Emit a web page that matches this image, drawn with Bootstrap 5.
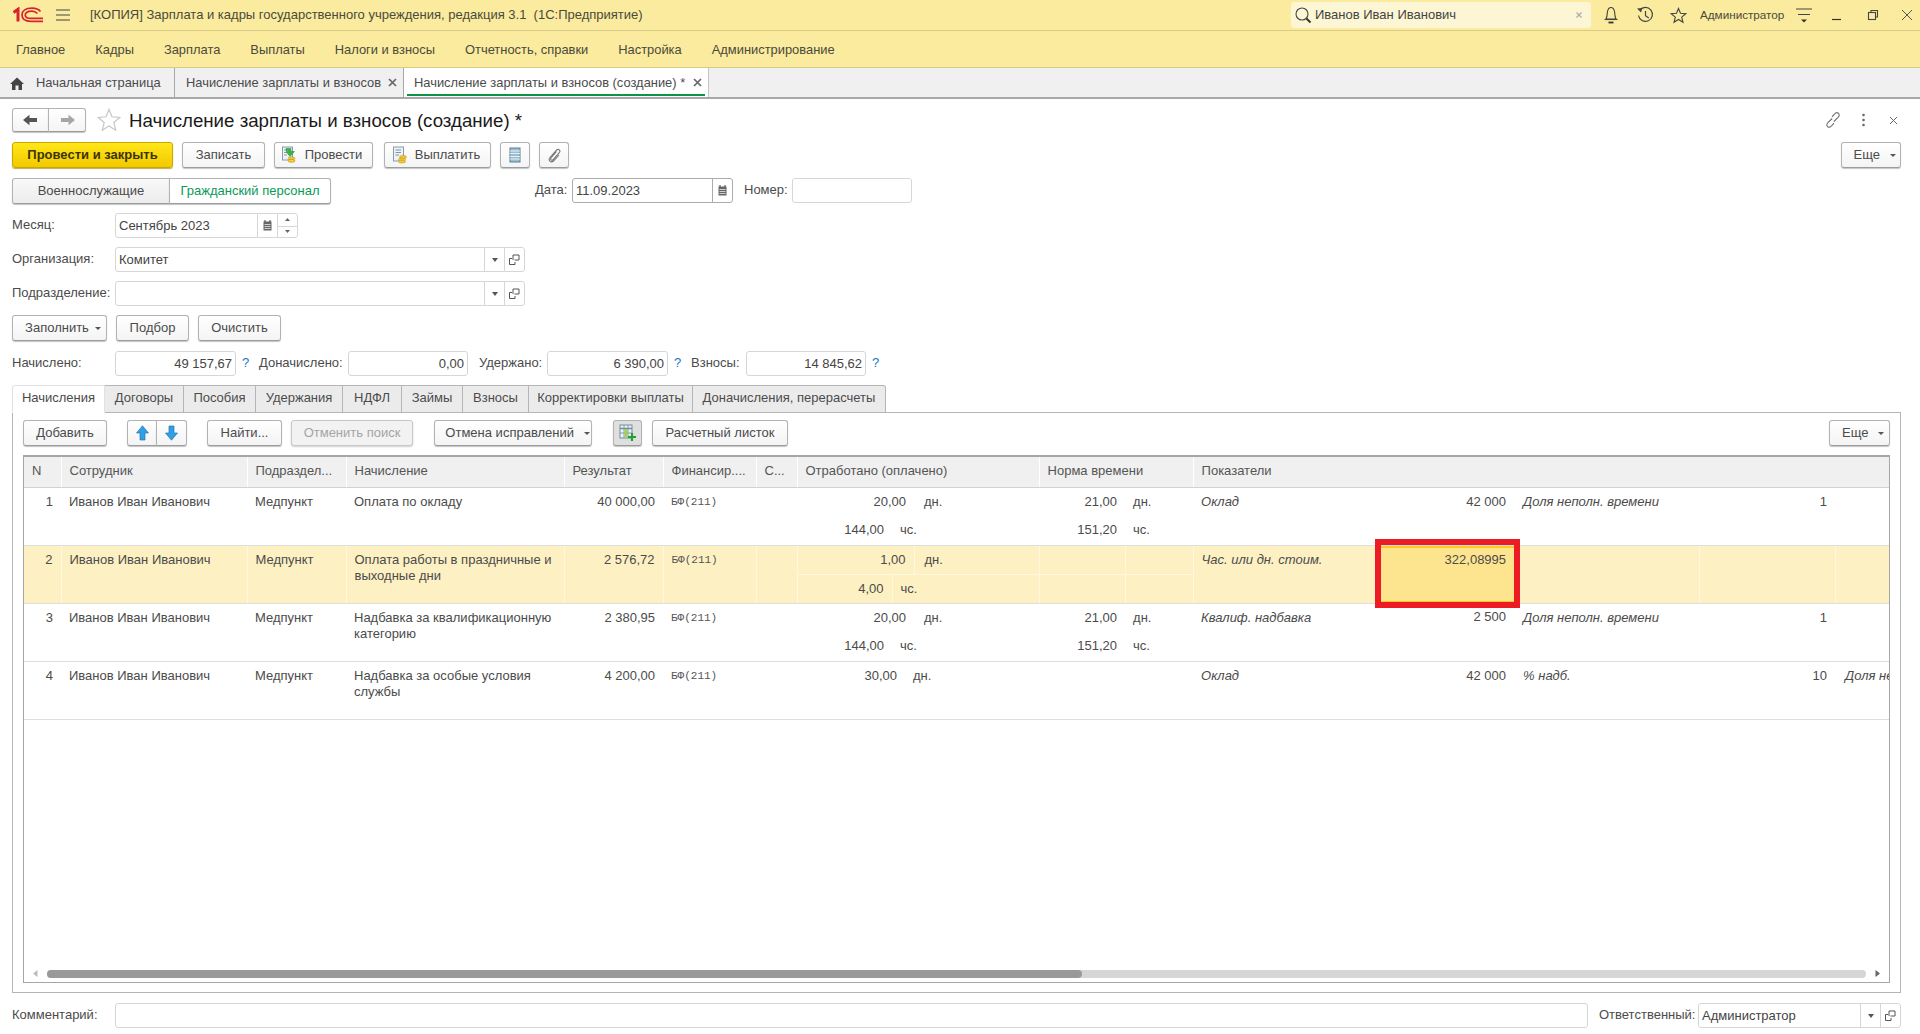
<!DOCTYPE html>
<html lang="ru"><head><meta charset="utf-8"><title>1С</title>
<link href="https://cdn.jsdelivr.net/npm/bootstrap@5.3.0/dist/css/bootstrap.min.css" rel="stylesheet">
<style>
html,body{height:100%}
body{font-family:"Liberation Sans",Arial,sans-serif;font-size:13px;line-height:16px;color:#4b4b4b;background:#fff;overflow:hidden}
.ico{display:block;flex:none}
.topbar{height:31px;background:#fbeb9f;border-bottom:1px solid #d9cb86;flex:none;padding-left:13px}
.hamb{margin-left:12px}
.apptitle{margin-left:19px;width:1201px;color:#4a4a3a;white-space:nowrap}
.searchbox{width:300px;height:26px;background:#fdf6d5;border-radius:3px;padding:0 8px 0 3px;color:#444}
.searchbox span{margin-left:3px}
.sx{margin-left:auto}
.tbi1{margin-left:12px}.tbi2{margin-left:17px}.tbi3{margin-left:16px}.adm{font-size:11.7px;color:#4a4a3a;white-space:nowrap;margin-left:13px}
.tbi4{margin-left:12px}.tbi5{margin-left:19px}.tbi6{margin-left:25px}.tbi7{margin-left:22px}
.menubar{height:37px;background:#fbeb9f;border-bottom:1px solid #d9cb86;flex:none;padding:2px 0 0 16px;margin:0;list-style:none;gap:30px;font-size:12.9px}
.menubar a{color:#4a4a3a;text-decoration:none}
.tabbar{height:31px;background:#f0f0f0;border-bottom:2px solid #a8a8a8;flex:none;font-size:12.9px}
.ptab{height:29px;border-right:1px solid #a8a8a8;white-space:nowrap;position:relative;overflow:hidden;padding-top:1px}
.ptab.on{border-right:1px solid #c4c4c4;background:#fff}
.ptab.on::after{content:"";position:absolute;left:3px;right:3px;bottom:1px;height:2px;background:#0b9444}
.pt1{width:175px;padding-left:10px;gap:12px}.pt2{width:229px;padding-left:11px}.pt3{width:305px;padding-left:10px}
.ptx{position:absolute;top:10px;right:6px}
.pt2 .ptfade{width:198px;display:block}
.formarea{padding:9px 19px 6px 12px;min-height:0}
.rowgap9{margin-top:9px}.rowgap10{margin-top:10px}
.ttl{font-size:18.7px;color:#1a1a1a;height:24px;line-height:25px;margin-left:8px}
.staricon{margin-left:11px}
.rhd{margin-left:auto;padding-right:3px}
.rhd svg+svg{margin-left:21px}
.rhd svg+svg+svg{margin-left:24px}
.ob{height:26px;padding:0;font-size:13px;line-height:22px;color:#4b4b4b;border:1px solid #b3b3b3;border-bottom-color:#9c9c9c;border-radius:3px;background:linear-gradient(#fff,#f4f4f4);box-shadow:0 1px 1px #c4c4c4;display:inline-flex;align-items:center;justify-content:center;gap:6px}
.ob:hover,.ob:active{color:#4b4b4b;border-color:#b3b3b3}
.ob.gold{background:linear-gradient(#ffe71a,#f2c900);border-color:#c9a800;color:#3c3400;font-weight:700;box-shadow:0 1px 1px #bfae50;font-size:13px}
.ob.off,.ob.off:disabled{color:#a5a5a5;background:#f2f2f2;box-shadow:0 1px 2px #d0d0d0;opacity:1;border-color:#c8c8c8}
.ob.tog{background:#dfdfdf}
.ob.grey{background:linear-gradient(#f8f8f8,#ececec)}
.ob.lit{background:#fff;color:#0a9a56}
.ob.cr{padding-left:7px}
.ob.cr9{padding-left:9px}
.ob.icl{padding-right:4px}
.nv{height:24px}
.nv .ob{height:24px;width:37px}
.nv .ob:last-child{width:38px}
.caret-s{display:inline-block;border:3px solid transparent;border-top:3.5px solid #555;border-bottom:0;margin-left:0}
.w30{width:30px}.w31{width:31px}.w60{width:60px}.w61{width:61px}.w73{width:73px}.w75{width:75px}.w83{width:83px}.w84{width:84px}.w95{width:95px}.w99{width:99px}.w107{width:107px}.w122{width:122px}.w136{width:136px}.w158{width:158px}.w161{width:161px}.w162{width:162px}.w29{width:29px}
.ml9{margin-left:9px}.ml10{margin-left:10px}.ml11{margin-left:11px}.ml20{margin-left:20px}.ml21{margin-left:21px}.mla{margin-left:auto}
.lab{white-space:nowrap;line-height:24px;flex:none}
.lb103{width:103px}.lb38{width:37px;margin-left:204px}.lb49{width:48px;margin-left:11px}
.fld{flex-wrap:nowrap;height:25px}
.fld>.form-control,.fc{height:25px;min-height:0;padding:0 3px 1px;font-size:13px;line-height:22px;color:#444;border:1px solid #d6d6d6;border-radius:3px;background:#fff;box-shadow:none}
.fld>.addon{height:25px;width:21px;padding:0;justify-content:center;background:#fff;border:1px solid #d6d6d6;border-radius:0;margin-left:-1px}
.fld>.addon:last-child{border-radius:0 3px 3px 0}
.fld.dark>.form-control,.fld.dark>.addon,.fc.dark{border-color:#ababab}
.addon.spin{flex-direction:column;display:flex;align-items:center;gap:0}
.spin i{display:block;width:100%;height:50%;position:relative}
.spin i+i{border-top:1px solid #d6d6d6}
.f183{width:183px;flex:none}.f410{width:410px;flex:none}.f161{width:161px;flex:none}.f120{width:120px;flex:none}.f1473{width:1473px;flex:none}.f203{width:203px;flex:none}
.num{width:120px;flex:none;text-align:right;padding-right:3px!important}
.num.wd{width:121px}
.hlp{color:#1577c2;font-size:13px;line-height:24px;margin-left:6px;width:17px;flex:none;text-align:left}
.lbd{width:89px}.lbu{width:68px}.lbv{width:55px}
.otabs{border-bottom:0;height:28px;flex:none;flex-wrap:nowrap}
.otabs .nav-link{height:28px;padding:0;text-align:center;font-size:13px;line-height:24px;color:#4b4b4b;background:#ebebeb;border:1px solid #b5b5b5;border-left-width:0;border-radius:0;margin:0;white-space:nowrap}
.otabs .nav-item:first-child .nav-link{border-left-width:1px;border-radius:3px 0 0 0}
.otabs .nav-item:last-child .nav-link{border-radius:0 3px 0 0}
.otabs .nav-link.active{background:#fff;border-bottom-color:#fff;color:#4b4b4b;position:relative;z-index:1}
.t1{width:93px}.t2{width:79px}.t3{width:72px}.t4{width:87px}.t5{width:59px}.t6{width:61px}.t7{width:66px}.t8{width:164px}.t9{width:193px}
.panelbox{border:1px solid #b5b5b5;padding:7px 10px 9px 10px;min-height:0;margin-top:-1px}
.gridbox{border:1px solid #a6a6a6;border-top-width:2px;position:relative;overflow:hidden;min-height:0;margin-top:9px}
.gridscroll{min-height:0;overflow:hidden}
.dg{table-layout:fixed;width:1951px;margin:0;border-collapse:collapse;font-size:13px;color:#4b4b4b}
.dg>:not(caption)>*>*{padding:0;border:0;background:transparent;box-shadow:none;color:inherit}
.dg th{height:30px;background:#f0f0f0!important;font-weight:400;padding:0 8px 2px!important;border-right:1px solid #fff!important;border-bottom:1px solid #d2d2d2!important;white-space:nowrap;overflow:hidden;vertical-align:middle;color:#555!important}
.dg td{height:29px;vertical-align:top;padding:6px 8px 0 8px!important;white-space:nowrap;line-height:16px;overflow:hidden}
.dg td.wr{white-space:normal;line-height:16px}
.dg td.r{text-align:right}
.dg td.r9{padding-right:9px!important}
.dg td.u2{padding-left:10px!important}
.dg td.l10{padding-left:10px!important}
.dg td.it{font-style:italic}
.dg td.mono{font-family:"Liberation Mono",monospace;font-size:11px;color:#555}
.dg tr.rb>td,.dg td.rb{border-bottom:1px solid #dedede!important}
.dg tr.sel>td{background:#fdf1c3!important;border-right:1px solid #fff8de!important}
.dg tr.ln>td.hl{border-bottom:1px solid #fff8de!important}
.dg tr.sel>td.noln{border-right:0!important}
.dg tr.sel>td.act{background:#fde58f!important;box-shadow:inset 0 2px 0 #fbc91f,inset 0 -2px 0 #fbc91f!important;border-right:0!important}
.c0{width:37px}.c1{width:186px}.c2{width:99px}.c3{width:218px}.c4{width:99px}.c5{width:93px}.c6{width:41px}.c7{width:95px}.c8{width:13px}.c9{width:9px}.c10{width:125px}.c11{width:86px}.c12{width:68px}.c13{width:186px}.c14{width:136px}.c15{width:184px}.c16{width:136px}.c17{width:141px}
.redframe{position:absolute;left:1351px;top:82px;width:145px;height:69px;border:6px solid #ed1c24;pointer-events:none}
.sbar{height:11px;flex:none;margin:0 9px 3px 9px;gap:9px}
.strack{height:8px;background:#d6d6d6;border-radius:4px}
.sthumb{height:8px;width:1035px;background:#999;border-radius:4px}
.botrow{height:25px;margin-top:10px;flex:none}
.lbr{width:99px;margin-left:11px}
</style></head>
<body class="d-flex flex-column">
<header class="topbar d-flex align-items-center">
<svg class="ico" width="30" height="16" viewBox="0 0 30 16"><path d="M.5 5.500 L5 2.300 V14.500" fill="none" stroke="#d8232a" stroke-width="3"/><path d="M27.500 4.500 C25.500 2 22 1.200 19 1.200 C12 1.200 9 4 9 8 C9 12 12 14.300 18 14.300 H30" fill="none" stroke="#d8232a" stroke-width="1.700"/><path d="M24.500 6.500 C22.500 4.600 20.500 4.200 19 4.200 C14.500 4.200 12.200 5.500 12.200 8 C12.200 10.400 14.500 11.400 18 11.400 H30" fill="none" stroke="#d8232a" stroke-width="1.700"/></svg>
<svg class="ico hamb" width="16" height="12" viewBox="0 0 16 12"><path d="M1 1H15M1 6H15M1 11H15" stroke="#444" stroke-width="1.200"/></svg>
<span class="apptitle">[КОПИЯ] Зарплата и кадры государственного учреждения, редакция 3.1&nbsp; (1С:Предприятие)</span>
<div class="searchbox d-flex align-items-center">
<svg class="ico" width="18" height="18" viewBox="0 0 18 18"><circle cx="8" cy="8" r="6" fill="none" stroke="#444" stroke-width="1.100"/><path d="M12.500 12.500 L16.500 16.500" stroke="#333" stroke-width="2"/></svg>
<span>Иванов Иван Иванович</span>
<svg class="ico sx" width="8" height="8" viewBox="0 0 8 8"><path d="M1.500 1.500L6.500 6.500M6.500 1.500L1.500 6.500" stroke="#aaa" stroke-width="1.200"/></svg>
</div>
<svg class="ico tbi1" width="16" height="19" viewBox="0 0 16 19"><path d="M3 13 C4.500 10 4 8 4.500 5.500 C5 3 6.500 1.500 8 1.500 C9.500 1.500 11 3 11.500 5.500 C12 8 11.500 10 13 13 Z" fill="none" stroke="#444" stroke-width="1.100"/><path d="M1.500 13.500H14.500" stroke="#444" stroke-width="1.100"/><path d="M5.500 16.500H10.500" stroke="#333" stroke-width="1.800"/></svg>
<svg class="ico tbi2" width="18" height="18" viewBox="0 0 18 18"><path d="M3.800 4.200 A7 7 0 1 1 2.500 9.500" fill="none" stroke="#444" stroke-width="1.200"/><path d="M1 2.500 L6.500 2 L5 6.500 Z" fill="#444"/><path d="M9.500 5 V9.800 L12.800 12" fill="none" stroke="#444" stroke-width="1.200"/></svg>
<svg class="ico tbi3" width="17" height="17" viewBox="0 0 17 17"><path d="M8.500 1.500 L10.500 6.300 L15.800 6.700 L11.700 10.100 L13 15.300 L8.500 12.500 L4 15.300 L5.300 10.100 L1.200 6.700 L6.500 6.300 Z" fill="none" stroke="#444" stroke-width="1.100"/></svg>
<span class="adm">Администратор</span>
<svg class="ico tbi4" width="16" height="17" viewBox="0 0 16 17"><path d="M0 2H16M2 7.500H14" stroke="#444" stroke-width="1.100"/><path d="M5 12.500H11L8 15.500Z" fill="#333"/></svg>
<svg class="ico tbi5" width="11" height="12" viewBox="0 0 11 12"><path d="M1 10.500H10" stroke="#333" stroke-width="1.200"/></svg>
<svg class="ico tbi6" width="12" height="12" viewBox="0 0 12 12"><path d="M4 3V1.500H10.500V8H8.500" fill="none" stroke="#444" stroke-width="1.100"/><rect x="1.500" y="3.500" width="7" height="7" fill="none" stroke="#444" stroke-width="1.100"/></svg>
<svg class="ico tbi7" width="12" height="12" viewBox="0 0 12 12"><path d="M1 1L11 11M11 1L1 11" stroke="#555" stroke-width="1"/></svg>
</header>
<ul class="menubar d-flex align-items-center">
<li><a href="#">Главное</a></li><li><a href="#">Кадры</a></li><li><a href="#">Зарплата</a></li><li><a href="#">Выплаты</a></li><li><a href="#">Налоги и взносы</a></li><li><a href="#">Отчетность, справки</a></li><li><a href="#">Настройка</a></li><li><a href="#">Администрирование</a></li>
</ul>
<div class="tabbar d-flex">
<div class="ptab pt1 d-flex align-items-center"><svg class="ico" width="14" height="13" viewBox="0 0 14 13"><path d="M7 .5 L14 7 H12 V13 H8.500 V8.500 H5.500 V13 H2 V7 H0 Z" fill="#444"/></svg><span>Начальная страница</span></div>
<div class="ptab pt2 d-flex align-items-center"><span class="ptfade">Начисление зарплаты и взносов</span><svg class="ico ptx" width="9" height="9" viewBox="0 0 9 9"><path d="M1 1L8 8M8 1L1 8" stroke="#666" stroke-width="1.700"/></svg></div>
<div class="ptab pt3 on d-flex align-items-center"><span>Начисление зарплаты и взносов (создание) *</span><svg class="ico ptx" width="9" height="9" viewBox="0 0 9 9"><path d="M1 1L8 8M8 1L1 8" stroke="#666" stroke-width="1.700"/></svg></div>
</div>
<main class="formarea flex-grow-1 d-flex flex-column">
<div class="d-flex align-items-center">
<div class="btn-group nv"><button class="btn ob"><svg width="15" height="12" viewBox="0 0 15 12"><path d="M0 6L6.500 .8V4H14V8H6.500V11.200Z" fill="#555"/></svg></button><button class="btn ob"><svg width="15" height="12" viewBox="0 0 15 12"><path d="M15 6L8.500 .8V4H1V8H8.500V11.200Z" fill="#a6a6a6"/></svg></button></div>
<svg class="ico staricon" width="24" height="24" viewBox="0 0 24 24"><path d="M12 1.500 L15 8.800 L22.800 9.400 L16.800 14.500 L18.700 22.200 L12 18 L5.300 22.200 L7.200 14.500 L1.200 9.400 L9 8.800 Z" fill="#fff" stroke="#c6c6c6" stroke-width="1.200"/></svg>
<span class="ttl">Начисление зарплаты и взносов (создание) *</span>
<div class="rhd d-flex align-items-center">
<svg class="ico" width="16" height="18" viewBox="0 0 16 18"><g fill="none" stroke="#6f6f6f" stroke-width="1.100"><path d="M7.200 7.500 L3.200 11.300 C1.500 13 1.400 14.700 2.500 15.700 C3.600 16.700 5.200 16.400 6.800 14.700 L9 12.200"/><path d="M8.800 10.500 L12.800 6.700 C14.500 5 14.600 3.300 13.500 2.300 C12.400 1.300 10.800 1.600 9.200 3.300 L7 5.800"/></g></svg>
<svg class="ico" width="3" height="14" viewBox="0 0 3 14"><circle cx="1.500" cy="2" r="1.300" fill="#666"/><circle cx="1.500" cy="7" r="1.300" fill="#666"/><circle cx="1.500" cy="12" r="1.300" fill="#666"/></svg>
<svg class="ico" width="9" height="9" viewBox="0 0 9 9"><path d="M1 1L8 8M8 1L1 8" stroke="#666" stroke-width="1"/></svg>
</div>
</div>
<div class="d-flex rowgap10">
<button class="btn ob gold w161">Провести и закрыть</button>
<button class="btn ob w83 ml9">Записать</button>
<button class="btn ob icl w99 ml9"><svg width="18" height="18" viewBox="0 0 18 18"><rect x="1.500" y="1" width="10" height="13" fill="#eef4f6" stroke="#8a9ba5"/><path d="M3 4H6M3 6.500H6M3 9H6" stroke="#8a9ba5"/><path d="M5 2.500 H10 V5.500 H13.500 L9 10.500 L5 5.500 H7.500 V4.500 H5Z" fill="#38b34a" stroke="#1f8a34" stroke-width=".5"/><ellipse cx="10.500" cy="12.300" rx="3.500" ry="1.500" fill="#f4cd3c" stroke="#b8911a" stroke-width=".6"/><ellipse cx="10.500" cy="14.800" rx="3.500" ry="1.500" fill="#f4cd3c" stroke="#b8911a" stroke-width=".6"/></svg>Провести</button>
<button class="btn ob icl w107 ml11"><svg width="18" height="18" viewBox="0 0 18 18"><rect x="2.500" y="1" width="10" height="14" fill="#eef4f6" stroke="#8a9ba5"/><path d="M4.500 4H10M4.500 6.500H10M4.500 9H8" stroke="#7f93a0"/><ellipse cx="12" cy="11" rx="3.500" ry="1.500" fill="#f4cd3c" stroke="#b8911a" stroke-width=".6"/><ellipse cx="11" cy="13.500" rx="3.500" ry="1.500" fill="#f4cd3c" stroke="#b8911a" stroke-width=".6"/><ellipse cx="11" cy="15.500" rx="3.500" ry="1.500" fill="#f4cd3c" stroke="#b8911a" stroke-width=".6"/></svg>Выплатить</button>
<button class="btn ob w30 ml9"><svg width="12" height="16" viewBox="0 0 12 16"><rect x="1" y="1" width="10" height="14" fill="#9fbdd2" stroke="#5d7f98"/><path d="M1 4H11M1 6.500H11M1 9.500H11M1 12H11" stroke="#e4eef4" stroke-width="1"/></svg></button>
<button class="btn ob w30 ml9"><svg width="15" height="15" viewBox="0 0 15 15"><path d="M9.500 3.500 L4 10 C3 11.500 4.500 13 6 11.800 L12.500 4.300 C13.800 2.500 11.500 .500 9.700 2 L3 9.500 C.8 12 3.800 15.500 6.500 13 L12 7" fill="none" stroke="#777" stroke-width="1.100"/></svg></button>
<button class="btn ob cr w60 mla">Еще&nbsp;<span class="caret-s"></span></button>
</div>
<div class="d-flex rowgap10">
<div class="btn-group"><button class="btn ob grey w158">Военнослужащие</button><button class="btn ob lit w162 fw-normal">Гражданский персонал</button></div>
<label class="lab lb38">Дата:</label>
<div class="input-group fld dark f161"><input class="form-control" value="11.09.2023"><span class="input-group-text addon"><svg width="9" height="11" viewBox="0 0 9 11"><path d="M.5 1.500H8.500V10.500H.5Z" fill="#666"/><path d="M2 0V2M7 0V2" stroke="#444"/><path d="M1.500 4.500H7.500M1.500 6.500H7.500M1.500 8.500H7.500" stroke="#e8e8e8" stroke-width=".8"/></svg></span></div>
<label class="lab lb49">Номер:</label>
<input class="form-control fc f120">
</div>
<div class="d-flex rowgap9">
<label class="lab lb103">Месяц:</label>
<div class="input-group fld f183"><input class="form-control" value="Сентябрь 2023"><span class="input-group-text addon"><svg width="9" height="11" viewBox="0 0 9 11"><path d="M.5 1.500H8.500V10.500H.5Z" fill="#666"/><path d="M2 0V2M7 0V2" stroke="#444"/><path d="M1.500 4.500H7.500M1.500 6.500H7.500M1.500 8.500H7.500" stroke="#e8e8e8" stroke-width=".8"/></svg></span><span class="input-group-text addon spin"><i class="d-flex align-items-center justify-content-center"><svg width="5" height="3" viewBox="0 0 5 3"><path d="M0 3L2.500 0L5 3Z" fill="#666"/></svg></i><i class="d-flex align-items-center justify-content-center"><svg width="5" height="3" viewBox="0 0 5 3"><path d="M0 0L2.500 3L5 0Z" fill="#666"/></svg></i></span></div>
</div>
<div class="d-flex rowgap9">
<label class="lab lb103">Организация:</label>
<div class="input-group fld f410"><input class="form-control" value="Комитет"><span class="input-group-text addon"><svg width="6" height="4" viewBox="0 0 6 4"><path d="M0 0H6L3 4Z" fill="#555"/></svg></span><span class="input-group-text addon"><svg width="11" height="11" viewBox="0 0 11 11"><path d="M4 6V1H10V6H5.500" fill="none" stroke="#555"/><path d="M.5 4.500H3M.5 4.500V10.500H6V8" fill="none" stroke="#555"/></svg></span></div>
</div>
<div class="d-flex rowgap9">
<label class="lab lb103">Подразделение:</label>
<div class="input-group fld f410"><input class="form-control"><span class="input-group-text addon"><svg width="6" height="4" viewBox="0 0 6 4"><path d="M0 0H6L3 4Z" fill="#555"/></svg></span><span class="input-group-text addon"><svg width="11" height="11" viewBox="0 0 11 11"><path d="M4 6V1H10V6H5.500" fill="none" stroke="#555"/><path d="M.5 4.500H3M.5 4.500V10.500H6V8" fill="none" stroke="#555"/></svg></span></div>
</div>
<div class="d-flex rowgap9">
<button class="btn ob cr w95">Заполнить<span class="caret-s"></span></button>
<button class="btn ob w73 ml9">Подбор</button>
<button class="btn ob w83 ml9">Очистить</button>
</div>
<div class="d-flex rowgap10">
<label class="lab lb103">Начислено:</label><input class="form-control fc num wd" value="49 157,67"><span class="hlp">?</span>
<label class="lab lbd">Доначислено:</label><input class="form-control fc num" value="0,00">
<label class="lab lbu ml11">Удержано:</label><input class="form-control fc num wd" value="6 390,00"><span class="hlp">?</span>
<label class="lab lbv">Взносы:</label><input class="form-control fc num" value="14 845,62"><span class="hlp">?</span>
</div>
<ul class="nav nav-tabs otabs rowgap9">
<li class="nav-item"><a class="nav-link active t1" href="#">Начисления</a></li><li class="nav-item"><a class="nav-link t2" href="#">Договоры</a></li><li class="nav-item"><a class="nav-link t3" href="#">Пособия</a></li><li class="nav-item"><a class="nav-link t4" href="#">Удержания</a></li><li class="nav-item"><a class="nav-link t5" href="#">НДФЛ</a></li><li class="nav-item"><a class="nav-link t6" href="#">Займы</a></li><li class="nav-item"><a class="nav-link t7" href="#">Взносы</a></li><li class="nav-item"><a class="nav-link t8" href="#">Корректировки выплаты</a></li><li class="nav-item"><a class="nav-link t9" href="#">Доначисления, перерасчеты</a></li>
</ul>
<section class="panelbox flex-grow-1 d-flex flex-column">
<div class="d-flex">
<button class="btn ob w84">Добавить</button>
<div class="btn-group ml20"><button class="btn ob w30"><svg width="13" height="16" viewBox="0 0 13 16"><path d="M6.500 .8L12.500 8H9V15H4V8H.5Z" fill="#2f9fe6" stroke="#2a79b0" stroke-width=".7"/></svg></button><button class="btn ob w31"><svg width="13" height="16" viewBox="0 0 13 16"><path d="M6.500 15.200L12.500 8H9V1H4V8H.5Z" fill="#2f9fe6" stroke="#2a79b0" stroke-width=".7"/></svg></button></div>
<button class="btn ob w75 ml20">Найти...</button>
<button class="btn ob off w122 ml9" disabled>Отменить поиск</button>
<button class="btn ob cr9 w158 ml21">Отмена исправлений&nbsp;<span class="caret-s"></span></button>
<button class="btn ob tog w29 ml21"><svg width="18" height="18" viewBox="0 0 18 18"><rect x="1" y="1" width="12" height="13" fill="#e9f2f6" stroke="#6f8fa0"/><path d="M1 4.500H13" stroke="#6f8fa0" stroke-width="1.500"/><path d="M5 1V14M9 1V14M1 9H13" stroke="#6f8fa0" stroke-width=".8"/><rect x="5.500" y="5" width="3" height="8" fill="#a9cf4a"/><path d="M13 9V17M9 13H17" stroke="#27a12f" stroke-width="2.200"/></svg></button>
<button class="btn ob w136 ml10">Расчетный листок</button>
<button class="btn ob cr w61 mla">Еще&nbsp;<span class="caret-s"></span></button>
</div>
<div class="gridbox flex-grow-1 d-flex flex-column">
<div class="gridscroll flex-grow-1">
<table class="table dg">
<colgroup><col class="c0"><col class="c1"><col class="c2"><col class="c3"><col class="c4"><col class="c5"><col class="c6"><col class="c7"><col class="c8"><col class="c9"><col class="c10"><col class="c11"><col class="c12"><col class="c13"><col class="c14"><col class="c15"><col class="c16"><col class="c17"></colgroup>
<thead><tr><th>N</th><th>Сотрудник</th><th>Подраздел...</th><th>Начисление</th><th>Результат</th><th>Финансир....</th><th>С...</th><th colspan="4">Отработано (оплачено)</th><th colspan="2">Норма времени</th><th colspan="5">Показатели</th></tr></thead>
<tbody>
<tr><td class="r rb" rowspan="2">1</td><td class="rb" rowspan="2">Иванов Иван Иванович</td><td class="rb" rowspan="2">Медпункт</td><td class="wr rb" rowspan="2">Оплата по окладу</td><td class="r rb" rowspan="2">40 000,00</td><td class="mono rb" rowspan="2">БФ(211)</td><td class="rb" rowspan="2"></td><td class="r" colspan="3">20,00</td><td class="u2">дн.</td><td class="r">21,00</td><td>дн.</td><td class="it">Оклад</td><td class="r r9">42 000</td><td class="it">Доля неполн. времени</td><td class="r">1</td><td></td></tr>
<tr class="rb"><td class="r">144,00</td><td colspan="3">чс.</td><td class="r">151,20</td><td>чс.</td><td colspan="5"></td></tr>
<tr class="sel ln"><td class="r rb" rowspan="2">2</td><td class="rb" rowspan="2">Иванов Иван Иванович</td><td class="rb" rowspan="2">Медпункт</td><td class="wr rb" rowspan="2">Оплата работы в праздничные и выходные дни</td><td class="r rb" rowspan="2">2 576,72</td><td class="mono rb" rowspan="2">БФ(211)</td><td class="rb" rowspan="2"></td><td class="r hl" colspan="3">1,00</td><td class="hl u2">дн.</td><td class="hl"></td><td class="hl"></td><td class="it rb" rowspan="2">Час. или дн. стоим.</td><td class="r r9 act" rowspan="2">322,08995</td><td class="rb" rowspan="2"></td><td class="rb" rowspan="2"></td><td rowspan="2" class="noln rb"></td></tr>
<tr class="sel rb"><td class="r">4,00</td><td colspan="3">чс.</td><td></td><td></td></tr>
<tr><td class="r rb" rowspan="2">3</td><td class="rb" rowspan="2">Иванов Иван Иванович</td><td class="rb" rowspan="2">Медпункт</td><td class="wr rb" rowspan="2">Надбавка за квалификационную категорию</td><td class="r rb" rowspan="2">2 380,95</td><td class="mono rb" rowspan="2">БФ(211)</td><td class="rb" rowspan="2"></td><td class="r" colspan="3">20,00</td><td class="u2">дн.</td><td class="r">21,00</td><td>дн.</td><td class="it">Квалиф. надбавка</td><td class="r r9">2 500</td><td class="it">Доля неполн. времени</td><td class="r">1</td><td></td></tr>
<tr class="rb"><td class="r">144,00</td><td colspan="3">чс.</td><td class="r">151,20</td><td>чс.</td><td colspan="5"></td></tr>
<tr><td class="r rb" rowspan="2">4</td><td class="rb" rowspan="2">Иванов Иван Иванович</td><td class="rb" rowspan="2">Медпункт</td><td class="wr rb" rowspan="2">Надбавка за особые условия службы</td><td class="r rb" rowspan="2">4 200,00</td><td class="mono rb" rowspan="2">БФ(211)</td><td class="rb" rowspan="2"></td><td class="r" colspan="2">30,00</td><td colspan="2">дн.</td><td></td><td></td><td class="it">Оклад</td><td class="r r9">42 000</td><td class="it">% надб.</td><td class="r">10</td><td class="it l10">Доля неполн. времени</td></tr>
<tr class="rb"><td colspan="4"></td><td colspan="2"></td><td colspan="5"></td></tr>
</tbody></table>
</div>
<div class="sbar d-flex align-items-center">
<svg class="ico" width="5" height="7" viewBox="0 0 5 7"><path d="M4.500 0V7L0 3.500Z" fill="#bbb"/></svg>
<div class="strack flex-grow-1"><div class="sthumb"></div></div>
<svg class="ico" width="5" height="7" viewBox="0 0 5 7"><path d="M.5 0V7L5 3.500Z" fill="#666"/></svg>
</div>
<div class="redframe"></div>
</div>
</section>
<div class="botrow d-flex">
<label class="lab lb103">Комментарий:</label><input class="form-control fc f1473">
<label class="lab lbr">Ответственный:</label>
<div class="input-group fld f203"><input class="form-control" value="Администратор"><span class="input-group-text addon"><svg width="6" height="4" viewBox="0 0 6 4"><path d="M0 0H6L3 4Z" fill="#555"/></svg></span><span class="input-group-text addon"><svg width="11" height="11" viewBox="0 0 11 11"><path d="M4 6V1H10V6H5.500" fill="none" stroke="#555"/><path d="M.5 4.500H3M.5 4.500V10.500H6V8" fill="none" stroke="#555"/></svg></span></div>
</div>
</main>
<script src="https://cdn.jsdelivr.net/npm/bootstrap@5.3.0/dist/js/bootstrap.bundle.min.js"></script>
</body></html>
